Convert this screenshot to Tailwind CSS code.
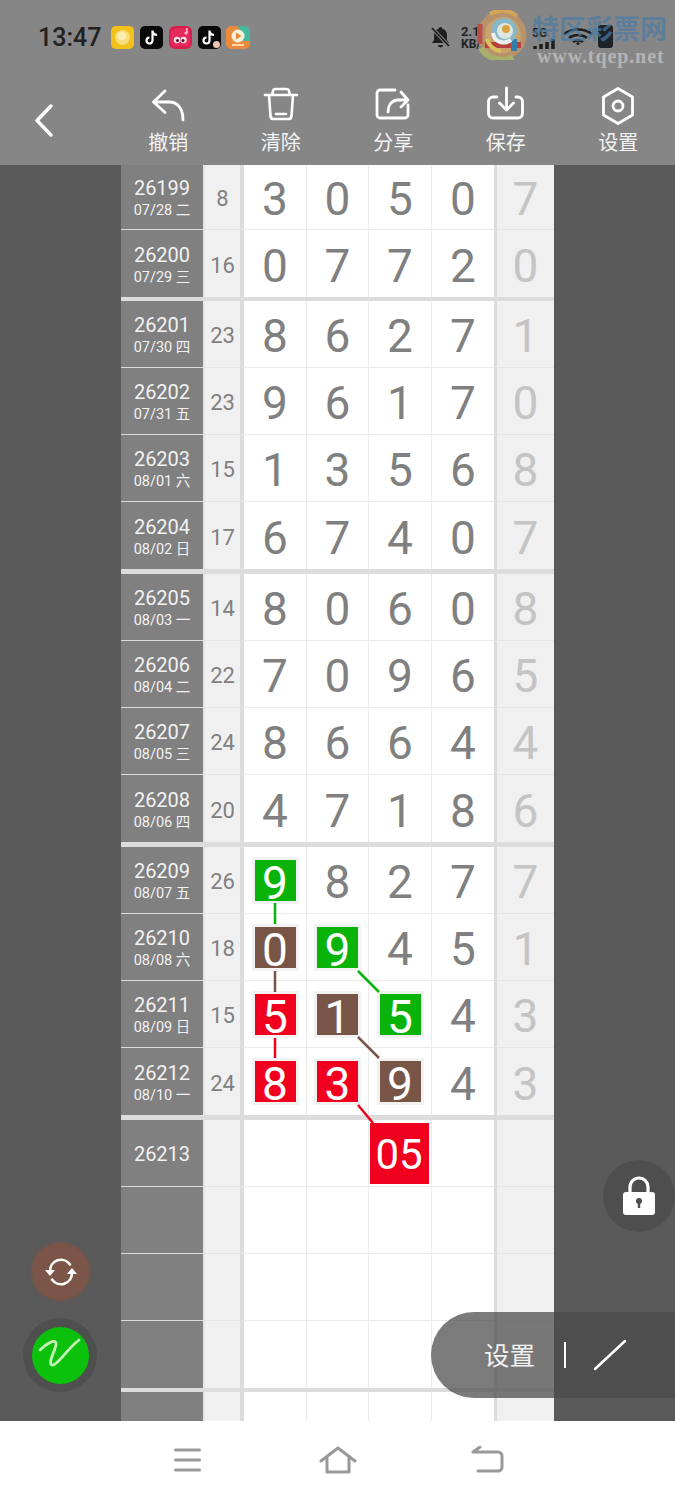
<!DOCTYPE html>
<html lang="zh">
<head>
<meta charset="UTF-8">
<meta name="viewport" content="width=device-width, initial-scale=1.0">
<title>走势图</title>
<script src="https://cdn.jsdelivr.net/npm/@tailwindcss/browser@4"></script>
</head>
<body class="bg-white font-['Roboto','Noto_Sans_CJK_SC',sans-serif]">
<div class="relative w-[675px] h-[1500px] overflow-hidden flex flex-col">

  <!-- status bar + toolbar -->
  <header class="relative h-[165px] shrink-0 bg-[#868686]">
    <div class="h-[75px] flex items-center pl-[38px] pb-[1px] gap-[10px]">
      <span class="text-[25px] font-medium text-[#222] leading-none">13:47</span>
      <div class="flex items-center gap-[5.500px]">
        <svg width="23" height="23" viewBox="0 0 23 23"><rect width="23" height="23" rx="5" fill="#f2c21a"/><circle cx="11.500" cy="11.500" r="7.500" fill="#f7df7a"/><circle cx="11" cy="10" r="4" fill="#fbeeb4"/></svg>
        <svg width="23" height="23" viewBox="0 0 23 23"><rect width="23" height="23" rx="5" fill="#0a0a0a"/><path d="M12.500 4.500v10a3 3 0 1 1-3-3M12.500 5c.4 2.400 2 3.800 4.500 4" fill="none" stroke="#fff" stroke-width="2.200"/></svg>
        <svg width="24" height="23" viewBox="0 0 24 23"><rect x="1" width="23" height="23" rx="6" fill="#d81e4f"/><path d="M3 6c3-5 14-6 18-1 2 5 2 12-1 15H5C2 16 2 10 3 6z" fill="#e62a5c"/><circle cx="9" cy="14" r="3.200" fill="#f9dfe6"/><circle cx="15.500" cy="14" r="3.200" fill="#f9dfe6"/><circle cx="9.500" cy="14.500" r="1.500" fill="#4a1020"/><circle cx="15" cy="14.500" r="1.500" fill="#4a1020"/><path d="M19 2v5" stroke="#f5c8d4" stroke-width="1.500"/><circle cx="18" cy="7" r="1.500" fill="#f5c8d4"/></svg>
        <svg width="23" height="23" viewBox="0 0 23 23"><rect width="23" height="23" rx="5" fill="#0a0a0a"/><path d="M11.500 4.500v10a3 3 0 1 1-3-3M11.500 5c.4 2.400 2 3.800 4.500 4" fill="none" stroke="#fff" stroke-width="2.200"/><circle cx="18.500" cy="18.500" r="3.500" fill="#eec4b6"/></svg>
        <svg width="24" height="23" viewBox="0 0 24 23"><rect width="24" height="23" rx="5" fill="#ea8a3c"/><path d="M12 0h7a5 5 0 0 1 5 5v10H17z" fill="#47b8a0"/><circle cx="12" cy="10" r="6.500" fill="#f7f0dc"/><path d="M10 6.500l5.500 3.500L10 13.500z" fill="#ea8a3c"/><path d="M6 19h12" stroke="#f8d9b0" stroke-width="2"/></svg>
      </div>
    </div>

    <!-- right side of the status bar -->
    <div class="absolute left-[429px] top-[25px] flex items-start text-[#222]">
      <svg class="shrink-0" width="23" height="24" viewBox="0 0 23 24"><path d="M11.500 2a1.800 1.800 0 0 1 1.800 1.800c3 .8 4.700 3 4.700 6.200v5l2 3H3l2-3v-5c0-3.200 1.700-5.400 4.700-6.200A1.800 1.800 0 0 1 11.500 2zM9 20h5a2.500 2.500 0 0 1-5 0z" fill="#1e1e1e"/><path d="M3 3l17 18" stroke="#868686" stroke-width="3.500"/><path d="M3 3l17 18" stroke="#1e1e1e" stroke-width="1.800"/></svg>
      <div class="ml-[9px] mt-[1px] w-[36px] shrink-0 flex flex-col font-bold text-[13px] leading-[12px]"><span>2.11</span><span class="text-[12px]">KB/s</span></div>
      <span class="ml-[35px] mt-[2px] w-[16px] shrink-0 text-[12px] leading-none font-bold">5G</span>
      <svg class="ml-[-15px] mt-[14px] shrink-0" width="24" height="10" viewBox="0 0 24 10"><path d="M2 7v3M8 5v5M14 3v7M20 0v10" stroke="#1e1e1e" stroke-width="3.500"/></svg>
      <svg class="ml-[6px] mt-[3px] shrink-0" width="30" height="17" viewBox="0 0 30 17"><path d="M1 6c8-6 20-6 28 0M6 10c5-4 13-4 18 0M10 14c3-2 7-2 10 0" fill="none" stroke="#1e1e1e" stroke-width="2.600"/><circle cx="15" cy="15.500" r="1.500" fill="#1e1e1e"/></svg>
      <div class="ml-[5px] w-[15px] h-[23px] shrink-0 rounded-[3px] bg-[#1c2228]"></div>
    </div>

    <!-- watermark lies over the status icons -->
    <svg class="absolute left-[477px] top-[10px]" width="50" height="50" viewBox="0 0 50 50">
      <circle cx="25" cy="25" r="24.500" fill="#bd9468" opacity=".92"/>
      <path d="M13 4a24 24 0 0 1 27 2" fill="none" stroke="#d3a65a" stroke-width="4"/>
      <path d="M4 38a24 24 0 0 0 32 9" fill="none" stroke="#a9b06c" stroke-width="6"/>
      <path d="M3 14v20" stroke="#b8504a" stroke-width="5"/>
      <circle cx="26" cy="25" r="18" fill="#c9a26c"/>
      <path d="M8 35h36" stroke="#b5403c" stroke-width="6"/>
      <path d="M37 29v12" stroke="#2f7fa8" stroke-width="6"/>
      <path d="M10 29a16 16 0 0 0 14 12" fill="none" stroke="#d9c05c" stroke-width="4"/>
      <circle cx="27" cy="21" r="13" fill="#86b8c6"/>
      <circle cx="28" cy="21" r="8" fill="#dfe6e2"/>
      <path d="M16 23c1 9 11 12 18 7" fill="none" stroke="#e8f0ee" stroke-width="4"/>
      <circle cx="29" cy="19" r="4" fill="#d9a23a"/>
    </svg>
    <span class="absolute left-[532px] top-[14px] text-[27px] leading-[32px] font-bold text-[#4a7ba5]/70 whitespace-nowrap">特区彩票网</span>
    <span class="absolute left-[537px] top-[45px] text-[20px] leading-[22px] font-['Liberation_Serif',serif] font-bold tracking-[0.9px] text-[#b4b4b4]">www.tqep.net</span>

    <!-- toolbar -->
    <div class="flex h-[90px] text-white/90 text-[20px] leading-[24px]">
      <div class="w-[112px] flex items-start justify-start">
        <svg class="ml-[28px] mt-[23px]" width="32" height="44" viewBox="0 0 32 44"><path d="M23 8L9 22.500 23 37" fill="none" stroke="#fff" stroke-width="3.500" stroke-linecap="round" stroke-linejoin="round"/></svg>
      </div>
      <div class="w-[112.500px] flex flex-col items-center pt-[10px]">
        <svg width="40" height="44" viewBox="0 0 40 44"><path d="M17 6L5.500 17 17 27.500M5.500 17H21c9 0 14 7 14 18" fill="none" stroke="#fff" stroke-width="2.800" stroke-linecap="round" stroke-linejoin="round"/></svg>
        <span class="mt-[2px]">撤销</span>
      </div>
      <div class="w-[112.500px] flex flex-col items-center pt-[10px]">
        <svg width="40" height="44" viewBox="0 0 40 44"><path d="M4 10h32M11 10l1-4c.3-1.300 1-2 2.500-2h11c1.500 0 2.200.7 2.500 2l1 4M8 10l1.500 21c.2 2 1.300 3 3 3h15c1.700 0 2.800-1 3-3L32 10M15 29h10" fill="none" stroke="#fff" stroke-width="2.600" stroke-linecap="round" stroke-linejoin="round"/></svg>
        <span class="mt-[2px]">清除</span>
      </div>
      <div class="w-[112.500px] flex flex-col items-center pt-[10px]">
        <svg width="40" height="44" viewBox="0 0 40 44"><path d="M22 5H7a3 3 0 0 0-3 3v22a3 3 0 0 0 3 3h25a3 3 0 0 0 3-3V20" fill="none" stroke="#fff" stroke-width="2.800" stroke-linecap="round"/><path d="M15 27c0-6 3-11 9-12h10M28 7l7 8-7 7" fill="none" stroke="#fff" stroke-width="2.800" stroke-linecap="round" stroke-linejoin="round"/></svg>
        <span class="mt-[2px]">分享</span>
      </div>
      <div class="w-[112.500px] flex flex-col items-center pt-[10px]">
        <svg width="40" height="44" viewBox="0 0 40 44"><path d="M11 12H7a4.500 4.500 0 0 0-4.500 4.500v12A4.500 4.500 0 0 0 7 33h25a4.500 4.500 0 0 0 4.500-4.500v-12A4.500 4.500 0 0 0 32 12h-2" fill="none" stroke="#fff" stroke-width="2.800" stroke-linecap="round"/><path d="M20.500 3v22M13.500 18l7 7 7-7" fill="none" stroke="#fff" stroke-width="2.800" stroke-linecap="round" stroke-linejoin="round"/></svg>
        <span class="mt-[2px]">保存</span>
      </div>
      <div class="w-[112.500px] flex flex-col items-center pt-[10px]">
        <svg width="40" height="44" viewBox="0 0 40 44"><path d="M20 3.500l14.500 8.500v18L20 38.500 5.500 30V12z" fill="none" stroke="#fff" stroke-width="2.800" stroke-linejoin="round"/><circle cx="20" cy="21" r="5" fill="none" stroke="#fff" stroke-width="2.800"/></svg>
        <span class="mt-[2px]">设置</span>
      </div>
    </div>
  </header>

  <main class="relative flex h-[1256px] shrink-0 overflow-hidden bg-[#5a5a5a]">
    <div class="w-[121px] shrink-0"></div>

    <!-- chart table -->
    <div class="w-[433px] shrink-0 bg-white text-[#808080] text-[46px] leading-none [&>div>div]:pt-[4px] [&>div>div:nth-child(n+3)]:font-[430]">

      <div class="flex h-[65px]">
        <div class="flex flex-col items-center justify-center w-[82px] bg-[#808080] border-b border-[#dcdcdc] text-[#f2f2f2]"><span class="text-[20px] leading-[24px]">26199</span><span class="text-[14.500px] leading-[22px]">07/28 二</span></div>
        <div class="flex items-center justify-center w-[37px] bg-[#f0f0f0] border-l-2 border-b border-[#e4e4e4] text-[22px]">8</div>
        <div class="flex items-center justify-center w-[67px] border-l-4 border-r border-b border-[#eaeaea] border-l-[#dcdcdc]">3</div>
        <div class="flex items-center justify-center w-[62px] border-r border-b border-[#eaeaea]">0</div>
        <div class="flex items-center justify-center w-[63px] border-r border-b border-[#eaeaea]">5</div>
        <div class="flex items-center justify-center w-[62px] border-b border-[#eaeaea]">0</div>
        <div class="flex items-center justify-center w-[60px] bg-[#f0f0f0] border-l-[3px] border-b border-[#e4e4e4] border-l-[#dcdcdc] text-[#c4c4c4]">7</div>
      </div>
      <div class="flex h-[67px]">
        <div class="flex flex-col items-center justify-center w-[82px] bg-[#808080] text-[#f2f2f2]"><span class="text-[20px] leading-[24px]">26200</span><span class="text-[14.500px] leading-[22px]">07/29 三</span></div>
        <div class="flex items-center justify-center w-[37px] bg-[#f0f0f0] border-l-2 border-[#e4e4e4] text-[22px]">16</div>
        <div class="flex items-center justify-center w-[67px] border-l-4 border-r border-[#eaeaea] border-l-[#dcdcdc]">0</div>
        <div class="flex items-center justify-center w-[62px] border-r border-[#eaeaea]">7</div>
        <div class="flex items-center justify-center w-[63px] border-r border-[#eaeaea]">7</div>
        <div class="flex items-center justify-center w-[62px]">2</div>
        <div class="flex items-center justify-center w-[60px] bg-[#f0f0f0] border-l-[3px] border-l-[#dcdcdc] text-[#c4c4c4]">0</div>
      </div>
      <div class="h-[4px] bg-[#dcdcdc]"></div>

      <div class="flex h-[67px]">
        <div class="flex flex-col items-center justify-center w-[82px] bg-[#808080] border-b border-[#dcdcdc] text-[#f2f2f2]"><span class="text-[20px] leading-[24px]">26201</span><span class="text-[14.500px] leading-[22px]">07/30 四</span></div>
        <div class="flex items-center justify-center w-[37px] bg-[#f0f0f0] border-l-2 border-b border-[#e4e4e4] text-[22px]">23</div>
        <div class="flex items-center justify-center w-[67px] border-l-4 border-r border-b border-[#eaeaea] border-l-[#dcdcdc]">8</div>
        <div class="flex items-center justify-center w-[62px] border-r border-b border-[#eaeaea]">6</div>
        <div class="flex items-center justify-center w-[63px] border-r border-b border-[#eaeaea]">2</div>
        <div class="flex items-center justify-center w-[62px] border-b border-[#eaeaea]">7</div>
        <div class="flex items-center justify-center w-[60px] bg-[#f0f0f0] border-l-[3px] border-b border-[#e4e4e4] border-l-[#dcdcdc] text-[#c4c4c4]">1</div>
      </div>
      <div class="flex h-[67px]">
        <div class="flex flex-col items-center justify-center w-[82px] bg-[#808080] border-b border-[#dcdcdc] text-[#f2f2f2]"><span class="text-[20px] leading-[24px]">26202</span><span class="text-[14.500px] leading-[22px]">07/31 五</span></div>
        <div class="flex items-center justify-center w-[37px] bg-[#f0f0f0] border-l-2 border-b border-[#e4e4e4] text-[22px]">23</div>
        <div class="flex items-center justify-center w-[67px] border-l-4 border-r border-b border-[#eaeaea] border-l-[#dcdcdc]">9</div>
        <div class="flex items-center justify-center w-[62px] border-r border-b border-[#eaeaea]">6</div>
        <div class="flex items-center justify-center w-[63px] border-r border-b border-[#eaeaea]">1</div>
        <div class="flex items-center justify-center w-[62px] border-b border-[#eaeaea]">7</div>
        <div class="flex items-center justify-center w-[60px] bg-[#f0f0f0] border-l-[3px] border-b border-[#e4e4e4] border-l-[#dcdcdc] text-[#c4c4c4]">0</div>
      </div>
      <div class="flex h-[67px]">
        <div class="flex flex-col items-center justify-center w-[82px] bg-[#808080] border-b border-[#dcdcdc] text-[#f2f2f2]"><span class="text-[20px] leading-[24px]">26203</span><span class="text-[14.500px] leading-[22px]">08/01 六</span></div>
        <div class="flex items-center justify-center w-[37px] bg-[#f0f0f0] border-l-2 border-b border-[#e4e4e4] text-[22px]">15</div>
        <div class="flex items-center justify-center w-[67px] border-l-4 border-r border-b border-[#eaeaea] border-l-[#dcdcdc]">1</div>
        <div class="flex items-center justify-center w-[62px] border-r border-b border-[#eaeaea]">3</div>
        <div class="flex items-center justify-center w-[63px] border-r border-b border-[#eaeaea]">5</div>
        <div class="flex items-center justify-center w-[62px] border-b border-[#eaeaea]">6</div>
        <div class="flex items-center justify-center w-[60px] bg-[#f0f0f0] border-l-[3px] border-b border-[#e4e4e4] border-l-[#dcdcdc] text-[#c4c4c4]">8</div>
      </div>
      <div class="flex h-[67px]">
        <div class="flex flex-col items-center justify-center w-[82px] bg-[#808080] text-[#f2f2f2]"><span class="text-[20px] leading-[24px]">26204</span><span class="text-[14.500px] leading-[22px]">08/02 日</span></div>
        <div class="flex items-center justify-center w-[37px] bg-[#f0f0f0] border-l-2 border-[#e4e4e4] text-[22px]">17</div>
        <div class="flex items-center justify-center w-[67px] border-l-4 border-r border-[#eaeaea] border-l-[#dcdcdc]">6</div>
        <div class="flex items-center justify-center w-[62px] border-r border-[#eaeaea]">7</div>
        <div class="flex items-center justify-center w-[63px] border-r border-[#eaeaea]">4</div>
        <div class="flex items-center justify-center w-[62px]">0</div>
        <div class="flex items-center justify-center w-[60px] bg-[#f0f0f0] border-l-[3px] border-l-[#dcdcdc] text-[#c4c4c4]">7</div>
      </div>
      <div class="h-[5px] bg-[#dcdcdc]"></div>

      <div class="flex h-[67px]">
        <div class="flex flex-col items-center justify-center w-[82px] bg-[#808080] border-b border-[#dcdcdc] text-[#f2f2f2]"><span class="text-[20px] leading-[24px]">26205</span><span class="text-[14.500px] leading-[22px]">08/03 一</span></div>
        <div class="flex items-center justify-center w-[37px] bg-[#f0f0f0] border-l-2 border-b border-[#e4e4e4] text-[22px]">14</div>
        <div class="flex items-center justify-center w-[67px] border-l-4 border-r border-b border-[#eaeaea] border-l-[#dcdcdc]">8</div>
        <div class="flex items-center justify-center w-[62px] border-r border-b border-[#eaeaea]">0</div>
        <div class="flex items-center justify-center w-[63px] border-r border-b border-[#eaeaea]">6</div>
        <div class="flex items-center justify-center w-[62px] border-b border-[#eaeaea]">0</div>
        <div class="flex items-center justify-center w-[60px] bg-[#f0f0f0] border-l-[3px] border-b border-[#e4e4e4] border-l-[#dcdcdc] text-[#c4c4c4]">8</div>
      </div>
      <div class="flex h-[67px]">
        <div class="flex flex-col items-center justify-center w-[82px] bg-[#808080] border-b border-[#dcdcdc] text-[#f2f2f2]"><span class="text-[20px] leading-[24px]">26206</span><span class="text-[14.500px] leading-[22px]">08/04 二</span></div>
        <div class="flex items-center justify-center w-[37px] bg-[#f0f0f0] border-l-2 border-b border-[#e4e4e4] text-[22px]">22</div>
        <div class="flex items-center justify-center w-[67px] border-l-4 border-r border-b border-[#eaeaea] border-l-[#dcdcdc]">7</div>
        <div class="flex items-center justify-center w-[62px] border-r border-b border-[#eaeaea]">0</div>
        <div class="flex items-center justify-center w-[63px] border-r border-b border-[#eaeaea]">9</div>
        <div class="flex items-center justify-center w-[62px] border-b border-[#eaeaea]">6</div>
        <div class="flex items-center justify-center w-[60px] bg-[#f0f0f0] border-l-[3px] border-b border-[#e4e4e4] border-l-[#dcdcdc] text-[#c4c4c4]">5</div>
      </div>
      <div class="flex h-[67px]">
        <div class="flex flex-col items-center justify-center w-[82px] bg-[#808080] border-b border-[#dcdcdc] text-[#f2f2f2]"><span class="text-[20px] leading-[24px]">26207</span><span class="text-[14.500px] leading-[22px]">08/05 三</span></div>
        <div class="flex items-center justify-center w-[37px] bg-[#f0f0f0] border-l-2 border-b border-[#e4e4e4] text-[22px]">24</div>
        <div class="flex items-center justify-center w-[67px] border-l-4 border-r border-b border-[#eaeaea] border-l-[#dcdcdc]">8</div>
        <div class="flex items-center justify-center w-[62px] border-r border-b border-[#eaeaea]">6</div>
        <div class="flex items-center justify-center w-[63px] border-r border-b border-[#eaeaea]">6</div>
        <div class="flex items-center justify-center w-[62px] border-b border-[#eaeaea]">4</div>
        <div class="flex items-center justify-center w-[60px] bg-[#f0f0f0] border-l-[3px] border-b border-[#e4e4e4] border-l-[#dcdcdc] text-[#c4c4c4]">4</div>
      </div>
      <div class="flex h-[67px]">
        <div class="flex flex-col items-center justify-center w-[82px] bg-[#808080] text-[#f2f2f2]"><span class="text-[20px] leading-[24px]">26208</span><span class="text-[14.500px] leading-[22px]">08/06 四</span></div>
        <div class="flex items-center justify-center w-[37px] bg-[#f0f0f0] border-l-2 border-[#e4e4e4] text-[22px]">20</div>
        <div class="flex items-center justify-center w-[67px] border-l-4 border-r border-[#eaeaea] border-l-[#dcdcdc]">4</div>
        <div class="flex items-center justify-center w-[62px] border-r border-[#eaeaea]">7</div>
        <div class="flex items-center justify-center w-[63px] border-r border-[#eaeaea]">1</div>
        <div class="flex items-center justify-center w-[62px]">8</div>
        <div class="flex items-center justify-center w-[60px] bg-[#f0f0f0] border-l-[3px] border-l-[#dcdcdc] text-[#c4c4c4]">6</div>
      </div>
      <div class="h-[5px] bg-[#dcdcdc]"></div>

      <div class="flex h-[67px]">
        <div class="flex flex-col items-center justify-center w-[82px] bg-[#808080] border-b border-[#dcdcdc] text-[#f2f2f2]"><span class="text-[20px] leading-[24px]">26209</span><span class="text-[14.500px] leading-[22px]">08/07 五</span></div>
        <div class="flex items-center justify-center w-[37px] bg-[#f0f0f0] border-l-2 border-b border-[#e4e4e4] text-[22px]">26</div>
        <div class="flex items-center justify-center w-[67px] border-l-4 border-r border-b border-[#eaeaea] border-l-[#dcdcdc]"><span class="flex items-center justify-center w-[41px] h-[41px] mt-[-4px] pt-[5px] bg-[#0ab30a] text-white shadow-[0_0_0_3px_#f2f2f2]">9</span></div>
        <div class="flex items-center justify-center w-[62px] border-r border-b border-[#eaeaea]">8</div>
        <div class="flex items-center justify-center w-[63px] border-r border-b border-[#eaeaea]">2</div>
        <div class="flex items-center justify-center w-[62px] border-b border-[#eaeaea]">7</div>
        <div class="flex items-center justify-center w-[60px] bg-[#f0f0f0] border-l-[3px] border-b border-[#e4e4e4] border-l-[#dcdcdc] text-[#c4c4c4]">7</div>
      </div>
      <div class="flex h-[67px]">
        <div class="flex flex-col items-center justify-center w-[82px] bg-[#808080] border-b border-[#dcdcdc] text-[#f2f2f2]"><span class="text-[20px] leading-[24px]">26210</span><span class="text-[14.500px] leading-[22px]">08/08 六</span></div>
        <div class="flex items-center justify-center w-[37px] bg-[#f0f0f0] border-l-2 border-b border-[#e4e4e4] text-[22px]">18</div>
        <div class="flex items-center justify-center w-[67px] border-l-4 border-r border-b border-[#eaeaea] border-l-[#dcdcdc]"><span class="flex items-center justify-center w-[41px] h-[41px] mt-[-4px] pt-[5px] bg-[#795548] text-white shadow-[0_0_0_3px_#f2f2f2]">0</span></div>
        <div class="flex items-center justify-center w-[62px] border-r border-b border-[#eaeaea]"><span class="flex items-center justify-center w-[41px] h-[41px] mt-[-4px] pt-[5px] bg-[#0ab30a] text-white shadow-[0_0_0_3px_#f2f2f2]">9</span></div>
        <div class="flex items-center justify-center w-[63px] border-r border-b border-[#eaeaea]">4</div>
        <div class="flex items-center justify-center w-[62px] border-b border-[#eaeaea]">5</div>
        <div class="flex items-center justify-center w-[60px] bg-[#f0f0f0] border-l-[3px] border-b border-[#e4e4e4] border-l-[#dcdcdc] text-[#c4c4c4]">1</div>
      </div>
      <div class="flex h-[67px]">
        <div class="flex flex-col items-center justify-center w-[82px] bg-[#808080] border-b border-[#dcdcdc] text-[#f2f2f2]"><span class="text-[20px] leading-[24px]">26211</span><span class="text-[14.500px] leading-[22px]">08/09 日</span></div>
        <div class="flex items-center justify-center w-[37px] bg-[#f0f0f0] border-l-2 border-b border-[#e4e4e4] text-[22px]">15</div>
        <div class="flex items-center justify-center w-[67px] border-l-4 border-r border-b border-[#eaeaea] border-l-[#dcdcdc]"><span class="flex items-center justify-center w-[41px] h-[41px] mt-[-4px] pt-[5px] bg-[#f0001e] text-white shadow-[0_0_0_3px_#f2f2f2]">5</span></div>
        <div class="flex items-center justify-center w-[62px] border-r border-b border-[#eaeaea]"><span class="flex items-center justify-center w-[41px] h-[41px] mt-[-4px] pt-[5px] bg-[#795548] text-white shadow-[0_0_0_3px_#f2f2f2]">1</span></div>
        <div class="flex items-center justify-center w-[63px] border-r border-b border-[#eaeaea]"><span class="flex items-center justify-center w-[41px] h-[41px] mt-[-4px] pt-[5px] bg-[#0ab30a] text-white shadow-[0_0_0_3px_#f2f2f2]">5</span></div>
        <div class="flex items-center justify-center w-[62px] border-b border-[#eaeaea]">4</div>
        <div class="flex items-center justify-center w-[60px] bg-[#f0f0f0] border-l-[3px] border-b border-[#e4e4e4] border-l-[#dcdcdc] text-[#c4c4c4]">3</div>
      </div>
      <div class="flex h-[67px]">
        <div class="flex flex-col items-center justify-center w-[82px] bg-[#808080] text-[#f2f2f2]"><span class="text-[20px] leading-[24px]">26212</span><span class="text-[14.500px] leading-[22px]">08/10 一</span></div>
        <div class="flex items-center justify-center w-[37px] bg-[#f0f0f0] border-l-2 border-[#e4e4e4] text-[22px]">24</div>
        <div class="flex items-center justify-center w-[67px] border-l-4 border-r border-[#eaeaea] border-l-[#dcdcdc]"><span class="flex items-center justify-center w-[41px] h-[41px] mt-[-4px] pt-[5px] bg-[#f0001e] text-white shadow-[0_0_0_3px_#f2f2f2]">8</span></div>
        <div class="flex items-center justify-center w-[62px] border-r border-[#eaeaea]"><span class="flex items-center justify-center w-[41px] h-[41px] mt-[-4px] pt-[5px] bg-[#f0001e] text-white shadow-[0_0_0_3px_#f2f2f2]">3</span></div>
        <div class="flex items-center justify-center w-[63px] border-r border-[#eaeaea]"><span class="flex items-center justify-center w-[41px] h-[41px] mt-[-4px] pt-[5px] bg-[#795548] text-white shadow-[0_0_0_3px_#f2f2f2]">9</span></div>
        <div class="flex items-center justify-center w-[62px]">4</div>
        <div class="flex items-center justify-center w-[60px] bg-[#f0f0f0] border-l-[3px] border-l-[#dcdcdc] text-[#c4c4c4]">3</div>
      </div>
      <div class="h-[5px] bg-[#dcdcdc]"></div>

      <div class="flex h-[67px]">
        <div class="flex flex-col items-center justify-center w-[82px] bg-[#808080] border-b border-[#dcdcdc] text-[#f2f2f2]"><span class="mb-[3px] text-[20px] leading-[24px]">26213</span></div>
        <div class="w-[37px] bg-[#f0f0f0] border-l-2 border-b border-[#e4e4e4]"></div>
        <div class="w-[67px] border-l-4 border-r border-b border-[#eaeaea] border-l-[#dcdcdc]"></div>
        <div class="w-[62px] border-r border-b border-[#eaeaea]"></div>
        <div class="flex items-center justify-center w-[63px] border-r border-b border-[#eaeaea]"><span class="flex items-center justify-center shrink-0 w-[59px] h-[61px] ml-[-2px] mt-[-4px] pt-[3px] bg-[#f0001e] text-white text-[42px]">05</span></div>
        <div class="w-[62px] border-b border-[#eaeaea]"></div>
        <div class="w-[60px] bg-[#f0f0f0] border-l-[3px] border-b border-[#e4e4e4] border-l-[#dcdcdc]"></div>
      </div>
      <div class="flex h-[67px]">
        <div class="w-[82px] bg-[#808080] border-b border-[#dcdcdc]"></div>
        <div class="w-[37px] bg-[#f0f0f0] border-l-2 border-b border-[#e4e4e4]"></div>
        <div class="w-[67px] border-l-4 border-r border-b border-[#eaeaea] border-l-[#dcdcdc]"></div>
        <div class="w-[62px] border-r border-b border-[#eaeaea]"></div>
        <div class="w-[63px] border-r border-b border-[#eaeaea]"></div>
        <div class="w-[62px] border-b border-[#eaeaea]"></div>
        <div class="w-[60px] bg-[#f0f0f0] border-l-[3px] border-b border-[#e4e4e4] border-l-[#dcdcdc]"></div>
      </div>
      <div class="flex h-[67px]">
        <div class="w-[82px] bg-[#808080] border-b border-[#dcdcdc]"></div>
        <div class="w-[37px] bg-[#f0f0f0] border-l-2 border-b border-[#e4e4e4]"></div>
        <div class="w-[67px] border-l-4 border-r border-b border-[#eaeaea] border-l-[#dcdcdc]"></div>
        <div class="w-[62px] border-r border-b border-[#eaeaea]"></div>
        <div class="w-[63px] border-r border-b border-[#eaeaea]"></div>
        <div class="w-[62px] border-b border-[#eaeaea]"></div>
        <div class="w-[60px] bg-[#f0f0f0] border-l-[3px] border-b border-[#e4e4e4] border-l-[#dcdcdc]"></div>
      </div>
      <div class="flex h-[67px]">
        <div class="w-[82px] bg-[#808080]"></div>
        <div class="w-[37px] bg-[#f0f0f0] border-l-2 border-[#e4e4e4]"></div>
        <div class="w-[67px] border-l-4 border-r border-[#eaeaea] border-l-[#dcdcdc]"></div>
        <div class="w-[62px] border-r border-[#eaeaea]"></div>
        <div class="w-[63px] border-r border-[#eaeaea]"></div>
        <div class="w-[62px]"></div>
        <div class="w-[60px] bg-[#f0f0f0] border-l-[3px] border-l-[#dcdcdc]"></div>
      </div>
      <div class="h-[4px] bg-[#dcdcdc]"></div>
      <div class="flex h-[30px]">
        <div class="w-[82px] bg-[#808080]"></div>
        <div class="w-[37px] bg-[#f0f0f0] border-l-2 border-[#e4e4e4]"></div>
        <div class="w-[67px] border-l-4 border-r border-[#eaeaea] border-l-[#dcdcdc]"></div>
        <div class="w-[62px] border-r border-[#eaeaea]"></div>
        <div class="w-[63px] border-r border-[#eaeaea]"></div>
        <div class="w-[62px]"></div>
        <div class="w-[60px] bg-[#f0f0f0] border-l-[3px] border-l-[#dcdcdc]"></div>
      </div>
    </div>

    <!-- links between marked numbers, viewBox in page coordinates -->
    <svg class="absolute left-0 top-0 pointer-events-none" width="675" height="1256" viewBox="0 165 675 1256" fill="none" stroke-width="2.500">
      <path d="M275 903V924M358 971L379 992" stroke="#0ab30a"/>
      <path d="M275 971V992M358 1037L379 1058" stroke="#795548"/>
      <path d="M275 1038V1058M358 1105L373 1123" stroke="#f0001e"/>
    </svg>

    <!-- floating buttons -->
    <div class="absolute left-[32px] top-[1078px] w-[57px] h-[57px] rounded-full bg-[#7a5548] shadow-[0_0_4px_#7a5548] flex items-center justify-center">
      <svg width="34" height="34" viewBox="0 0 34 34" fill="none" stroke="#fff" stroke-width="2.600" stroke-linecap="round"><path d="M26 9.500A11 11 0 0 0 6 16M8 24.500A11 11 0 0 0 28 18"/><path d="M1 15h10l-5 6zM23 19h10l-5-6z" fill="#fff" stroke="none"/></svg>
    </div>
    <div class="absolute left-[23px] top-[1153px] w-[74px] h-[74px] rounded-full bg-[#4f4f4f] flex items-center justify-center">
      <div class="w-[57px] h-[57px] rounded-full bg-[#0cc10c] flex items-center justify-center">
        <svg width="46" height="40" viewBox="0 0 46 40" fill="none" stroke="#c4f2b4" stroke-width="2.800" stroke-linecap="round" stroke-linejoin="round"><path d="M3 15C10 8 18 4 19 8c1 5-9 20-4 22 5 1 15-16 27-25"/></svg>
      </div>
    </div>
    <div class="absolute left-[603px] top-[995px] w-[72px] h-[72px] rounded-full bg-[#4e4e4e] flex items-center justify-center">
      <svg width="34" height="42" viewBox="0 0 34 42"><path d="M8 19v-7a9 9 0 0 1 18 0v7" fill="none" stroke="#fff" stroke-width="3.200"/><rect x="1" y="17" width="32" height="23" rx="3" fill="#fff"/><circle cx="17" cy="26" r="3" fill="#4e4e4e"/><path d="M15.800 27h2.400v6h-2.400z" fill="#4e4e4e"/></svg>
    </div>

    <!-- pen settings pill -->
    <div class="absolute left-[431px] top-[1147px] w-[244px] h-[86px] rounded-l-[43px] bg-[#4a4a4a]/73 flex items-center text-white">
      <span class="ml-[53px] mt-[3px] text-[25.500px] leading-none text-white/90">设置</span>
      <span class="ml-[29px] w-[2px] h-[26px] bg-white"></span>
      <svg class="ml-[27px]" width="34" height="32" viewBox="0 0 34 32"><path d="M2 30L32 2" stroke="#fff" stroke-width="2.500" stroke-linecap="round"/></svg>
    </div>
  </main>

  <!-- android nav bar -->
  <nav class="h-[79px] flex items-center justify-center bg-white pb-[1px]">
    <div class="w-[150px] flex justify-center">
      <svg class="ml-[-1px]" width="30" height="26" viewBox="0 0 30 26" fill="none" stroke="#999" stroke-width="3" stroke-linecap="round"><path d="M3.500 3h24M3.500 13h24M3.500 23h24"/></svg>
    </div>
    <div class="w-[150px] flex justify-center">
      <svg width="38" height="28" viewBox="0 0 38 28" fill="none" stroke="#999" stroke-width="3" stroke-linecap="round" stroke-linejoin="round"><path d="M2 15L19 2l17 13M8 12v14h22V12"/></svg>
    </div>
    <div class="w-[150px] flex justify-center">
      <svg width="34" height="28" viewBox="0 0 34 28" fill="none" stroke="#999" stroke-width="3" stroke-linecap="round" stroke-linejoin="round"><path d="M2 6h25a4 4 0 0 1 4 4v11a4 4 0 0 1-4 4H7M2 6l7-5"/></svg>
    </div>
  </nav>
</div>
</body>
</html>
